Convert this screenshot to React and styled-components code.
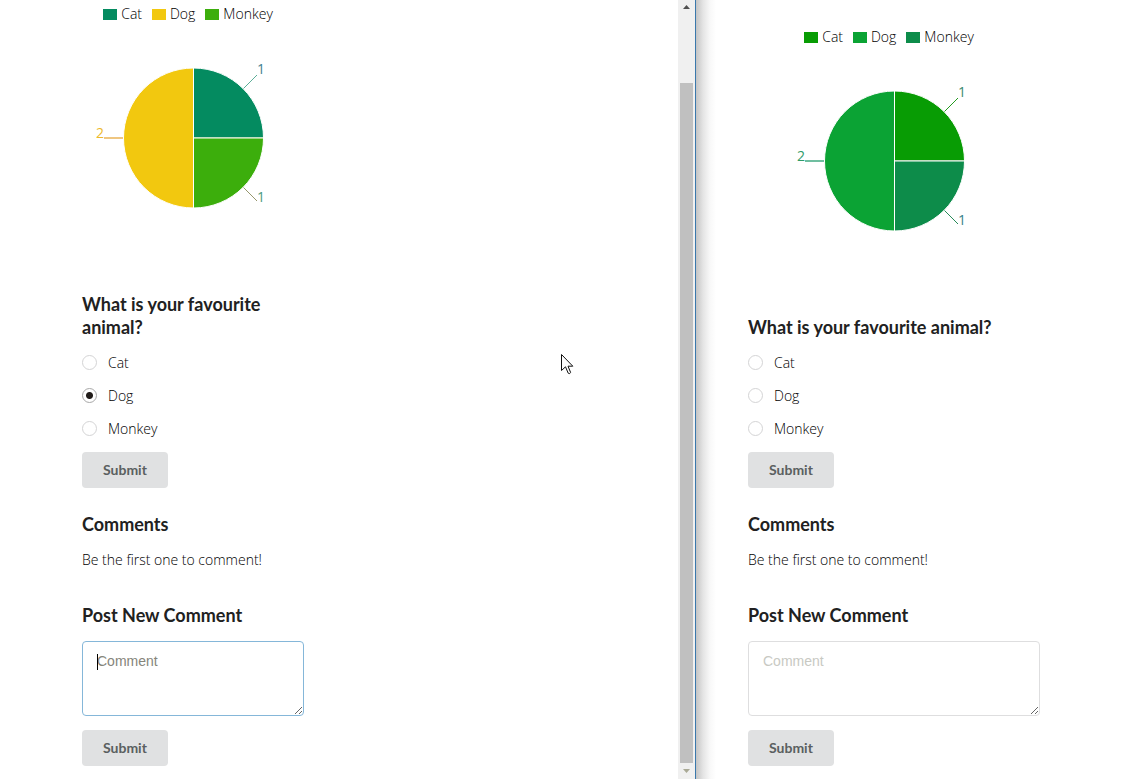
import React, { useId, useState } from "react";
import styled, { createGlobalStyle } from "styled-components";

const GlobalStyle = createGlobalStyle`
  *, *::before, *::after { box-sizing: border-box; }
  body {
    margin: 0;
    background: #fff;
    color: #000;
    font: 300 14px/20px "Open Sans", "Noto Sans", sans-serif;
  }
`;

const Desktop = styled.main`
  display: grid;
  grid-template-columns: minmax(0, 696fr) minmax(0, 436fr);
  min-height: 100vh;
  position: relative;
  overflow: hidden;
`;

const Window = styled.section`
  display: flex;
  min-width: 0;
  background: ${({ $shaded }) =>
    $shaded ? "linear-gradient(to right, #c4c4c4, #e4e4e4 7px, #f8f8f8 14px, #fff 20px)" : "#fff"};
  border-right: ${({ $shaded }) => ($shaded ? "0" : "1px solid #3a78ac")};
`;

const Page = styled.div`
  flex: 1;
  min-width: 0;
  padding: ${({ $wide }) => ($wide ? "27px 92px 13px 52px" : "4px 16px 13px 82px")};
`;

const Column = styled.div`
  max-width: ${({ $wide }) => ($wide ? "none" : "222px")};
`;

const Scrollbar = styled.div`
  width: 17px;
  flex: none;
  display: flex;
  flex-direction: column;
  background: #f0f0f0;
  padding: 0 2px;
`;

const ScrollButton = styled.button`
  height: ${({ $end }) => ($end ? "16px" : "13px")};
  padding: 0;
  border: 0;
  background: none;
  color: ${({ $end }) => ($end ? "#a9a995" : "#505050")};
  display: flex;
  align-items: center;
  justify-content: center;
`;

const ScrollTrack = styled.div`
  flex: 1;
  padding-top: 70px;
  display: flex;
`;

const ScrollThumb = styled.div`
  flex: 1;
  background: #c0c0c0;
`;

const Legend = styled.ul`
  list-style: none;
  margin: 0;
  padding: 0;
  display: flex;
  justify-content: center;
`;

const LegendItem = styled.li`
  display: flex;
  align-items: center;
  gap: 4px;
  margin-right: 10px;
`;

const Swatch = styled.span`
  width: 14px;
  height: 11px;
  margin-top: 1px;
  background: ${({ $color }) => $color};
`;

const ChartSvg = styled.svg`
  display: block;
  width: 222px;
  height: 228px;
  margin: 0 auto 41px;
  font-size: 14px;
  font-weight: 400;
`;

const Heading = styled.h3`
  margin: 0;
  color: #212121;
  font: 700 18px/23px Lato, sans-serif;
`;

const Options = styled.fieldset`
  border: 0;
  margin: 14px 0 0;
  padding: 0;
  display: flex;
  flex-direction: column;
  gap: 13px;
`;

const Option = styled.label`
  display: flex;
  align-items: center;
  gap: 11px;
`;

const Radio = styled.input`
  appearance: none;
  width: 15px;
  height: 15px;
  margin: 0 0 1px;
  border: 1px solid #d4d4d5;
  border-radius: 50%;
  background: #fff;
  &:checked {
    border-color: #a8a8a8;
    background: radial-gradient(circle, #211c1a 3px, #fff 4px);
  }
`;

const SubmitButton = styled.button`
  display: block;
  height: 36px;
  margin-top: ${({ $gap }) => $gap};
  padding: 0 21px;
  border: 0;
  border-radius: 4px;
  background: #e0e1e2;
  color: #5a5f60;
  font: 700 14px/14px Lato, sans-serif;
`;

const Block = styled.section`
  margin-top: ${({ $gap }) => $gap};
`;

const Empty = styled.p`
  margin: 14px 0 0;
`;

const Field = styled.div`
  position: relative;
  margin-top: 14px;
`;

const CommentBox = styled.textarea`
  display: block;
  width: 100%;
  height: 75px;
  padding: 10px 14px;
  border: 1px solid ${({ $active }) => ($active ? "#85b7d9" : "#dededf")};
  border-radius: 4px;
  outline: 0;
  background: #fff;
  color: #212121;
  font: 14px/18px "Liberation Sans", Arial, sans-serif;
  resize: vertical;
  &::placeholder {
    color: ${({ $active }) => ($active ? "#85857b" : "#c8c9c3")};
    opacity: 1;
  }
`;

const Caret = styled.span`
  position: absolute;
  left: 15px;
  top: 13px;
  width: 1px;
  height: 16px;
  background: #000;
`;

const Pointer = styled.svg`
  position: absolute;
  left: 561px;
  top: 354px;
  width: 13px;
  height: 22px;
  pointer-events: none;
`;

const LABELS = ["Cat", "Dog", "Monkey"];

function Chart({ colors, numbers, lines }) {
  const [cat, dog, monkey] = colors;
  return (
    <>
      <Legend>
        {LABELS.map((label, i) => (
          <LegendItem key={label}>
            <Swatch $color={colors[i]} />
            {label}
          </LegendItem>
        ))}
      </Legend>
      <ChartSvg viewBox="0 0 222 228" role="img" aria-label="Votes: Cat 1, Dog 2, Monkey 1">
        <g stroke="#fff" strokeWidth="1">
          <path d="M111.5 114V44a70 70 0 0 1 70 70Z" fill={cat} />
          <path d="M111.5 114V184a70 70 0 0 1 0-140Z" fill={dog} />
          <path d="M111.5 114H181.5a70 70 0 0 1-70 70Z" fill={monkey} />
        </g>
        <path d="M112 113.5H181" stroke="#c5dfc4" />
        <path d="M161.5 64.5L175 51" stroke={lines[0]} />
        <path d="M41 114H22" stroke={lines[1]} strokeWidth="2" />
        <path d="M161.5 163.5L175 177" stroke={lines[2]} />
        <text x="175" y="50" fill={numbers[0]}>1</text>
        <text x="14" y="114" fill={numbers[1]}>2</text>
        <text x="175" y="178" fill={numbers[2]}>1</text>
      </ChartSvg>
    </>
  );
}

function Poll({ wide, chart, initial }) {
  const id = useId();
  const [choice, setChoice] = useState(initial);
  return (
    <Page $wide={wide}>
      <Column $wide={wide}>
        <Chart {...chart} />
        <form onSubmit={(e) => e.preventDefault()}>
          <Heading id={`${id}-q`}>What is your favourite animal?</Heading>
          <Options aria-labelledby={`${id}-q`}>
            {LABELS.map((label) => (
              <Option key={label}>
                <Radio
                  type="radio"
                  name={`${id}-animal`}
                  checked={choice === label}
                  onChange={() => setChoice(label)}
                />
                {label}
              </Option>
            ))}
          </Options>
          <SubmitButton $gap="13px">Submit</SubmitButton>
        </form>
        <Block $gap="25px">
          <Heading>Comments</Heading>
          <Empty>Be the first one to comment!</Empty>
        </Block>
        <Block $gap="34px">
          <form onSubmit={(e) => e.preventDefault()}>
            <Heading id={`${id}-c`}>Post New Comment</Heading>
            <Field>
              <CommentBox aria-labelledby={`${id}-c`} placeholder="Comment" $active={!wide} />
              {!wide && <Caret />}
            </Field>
            <SubmitButton $gap="14px">Submit</SubmitButton>
          </form>
        </Block>
      </Column>
    </Page>
  );
}

const leftChart = {
  colors: ["#048b60", "#f2c80f", "#3cae0c"],
  lines: ["#5cae98", "#efc681", "#96966c"],
  numbers: ["#3f7f91", "#edb92a", "#4a9a80"],
};

const rightChart = {
  colors: ["#089c04", "#0ba334", "#0d8c4a"],
  lines: ["#239b20", "#70bea0", "#268a58"],
  numbers: ["#398a70", "#2f9b67", "#36828a"],
};

export default function App() {
  return (
    <>
      <GlobalStyle />
      <Desktop>
        <Window>
          <Poll chart={leftChart} initial="Dog" />
          <Scrollbar>
            <ScrollButton aria-label="Scroll up">
              <svg width="7" height="4" viewBox="0 0 7 4"><path d="M0 4L3.5 0L7 4Z" fill="currentColor" /></svg>
            </ScrollButton>
            <ScrollTrack><ScrollThumb /></ScrollTrack>
            <ScrollButton $end aria-label="Scroll down">
              <svg width="7" height="4" viewBox="0 0 7 4"><path d="M0 0L3.5 4L7 0Z" fill="currentColor" /></svg>
            </ScrollButton>
          </Scrollbar>
        </Window>
        <Window $shaded>
          <Poll wide chart={rightChart} initial="" />
        </Window>
        <Pointer viewBox="0 0 13 22" aria-hidden="true">
          <path d="M.5 .5V16.5L4.5 12.8L7.2 19.2Q8.8 20.5 9.6 18.4L7 12.2H11.8Z" fill="#fff" stroke="#111" />
        </Pointer>
      </Desktop>
    </>
  );
}
